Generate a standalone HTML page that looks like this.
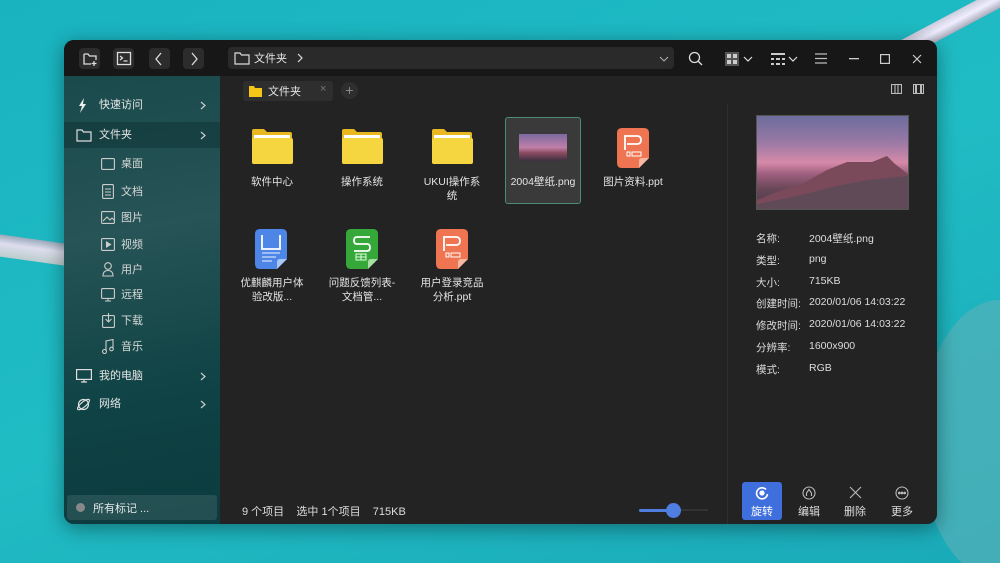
<!DOCTYPE html>
<html><head><meta charset="utf-8"><style>
*{margin:0;padding:0;box-sizing:border-box}
html,body{width:1000px;height:563px;overflow:hidden}
body{position:relative;font-family:"Liberation Sans","Noto Sans CJK SC",sans-serif;font-size:11px;color:#ddd;
background:linear-gradient(160deg,#19b3c0,#20bcc4 50%,#1aaab8);}
.bridge1{position:absolute;left:-20px;top:238px;width:90px;height:22px;background:linear-gradient(#9ab,#dde 40%,#bcc);transform:rotate(8deg)}
.bridge2{position:absolute;left:880px;top:10px;width:160px;height:18px;background:linear-gradient(#ccd,#eef,#aab);transform:rotate(-28deg)}
.island{position:absolute;left:920px;top:300px;width:160px;height:280px;border-radius:50%;background:#5fb0b8;opacity:.6}
.win{position:absolute;left:64px;top:40px;width:873px;height:484px;border-radius:10px;overflow:hidden;background:#232323;box-shadow:0 4px 20px rgba(0,0,0,.4)}
.title{position:absolute;left:0;top:0;width:873px;height:36px;background:#171717}
.side{position:absolute;left:0;top:36px;width:156px;height:448px;background:linear-gradient(170deg,#1a4a4c,#275456 35%,#0f4345 70%,#0b3b3e)}
.tb{position:absolute;top:8px;width:21px;height:21px;border-radius:4px;background:#2c2c2c}
.addr{position:absolute;left:164px;top:7px;width:446px;height:22px;border-radius:4px;background:#2a2a2a}
svg{position:absolute}
.si{position:absolute;left:0;width:156px;height:24px;line-height:24px;color:#e6e6e6}
.sub{position:absolute;left:57px;color:#d8d8d8;line-height:14px}
.ic{position:absolute;width:90px;text-align:center;font-size:10.5px;line-height:14px;color:#e4e4e4;white-space:nowrap}
.info{position:absolute;left:692px;font-size:10.5px;color:#ddd;white-space:nowrap}
.info span{position:absolute;left:53px;white-space:nowrap}
.btn{position:absolute;top:442px;width:40px;height:38px;text-align:center;font-size:10.5px;color:#ddd;padding-top:21px}
</style></head><body>
<div class="bridge1"></div><div class="bridge2"></div><div class="island"></div>
<div class="win">
<div class="title">
 <div class="tb" style="left:15px"></div><div class="tb" style="left:49px"></div><div class="tb" style="left:85px"></div><div class="tb" style="left:119px"></div>
 <svg style="left:18px;top:11px" width="16" height="16" viewBox="0 0 16 16" fill="none" stroke="#ddd" stroke-width="1.3"><path d="M2 3h4l1.5 2H14v4M2 3v10h7M12 10v5M9.5 12.5h5"/></svg>
 <svg style="left:52px;top:11px" width="16" height="15" viewBox="0 0 16 15" fill="none" stroke="#ddd" stroke-width="1.3"><rect x="1.5" y="1.5" width="13" height="12"/><path d="M4 5l2.5 2L4 9M7.5 10h4"/></svg>
 <svg style="left:90px;top:12px" width="10" height="14" fill="none" stroke="#ddd" stroke-width="1.3"><path d="M7 1L2 7l5 6"/></svg>
 <svg style="left:125px;top:12px" width="10" height="14" fill="none" stroke="#ddd" stroke-width="1.3"><path d="M3 1l5 6-5 6"/></svg>
 <div class="addr"></div>
 <svg style="left:170px;top:11px" width="16" height="14" fill="none" stroke="#ddd" stroke-width="1.2"><path d="M1 2h5l1.5 2H15v9H1z"/></svg>
 <div style="position:absolute;left:190px;top:10px;color:#e4e4e4;font-size:11px">文件夹</div>
 <svg style="left:232px;top:13px" width="8" height="10" fill="none" stroke="#ddd" stroke-width="1.2"><path d="M2 1l4 4-4 4"/></svg>
 <svg style="left:595px;top:16px" width="10" height="6" fill="none" stroke="#aaa" stroke-width="1.1"><path d="M1 1l4 4 4-4"/></svg>
 <svg style="left:624px;top:11px" width="15" height="15" fill="none" stroke="#ddd" stroke-width="1.3"><circle cx="6.5" cy="6.5" r="5"/><path d="M10 10l4 4"/></svg>
 <svg style="left:661px;top:12px" width="14" height="14" fill="#ccc"><rect x="0" y="0" width="14" height="14" fill="#555"/><rect x="2" y="2" width="4" height="4"/><rect x="8" y="2" width="4" height="4"/><rect x="2" y="8" width="4" height="4"/><rect x="8" y="8" width="4" height="4"/></svg>
 <svg style="left:679px;top:16px" width="10" height="6" fill="none" stroke="#ddd" stroke-width="1.2"><path d="M1 1l4 4 4-4"/></svg>
 <svg style="left:707px;top:13px" width="14" height="12" fill="#ccc"><rect x="0" y="0" width="14" height="2"/><rect x="0" y="5" width="3" height="2"/><rect x="5" y="5" width="4" height="2"/><rect x="11" y="5" width="3" height="2"/><rect x="0" y="10" width="3" height="2"/><rect x="5" y="10" width="4" height="2"/><rect x="11" y="10" width="3" height="2"/></svg>
 <svg style="left:724px;top:16px" width="10" height="6" fill="none" stroke="#ddd" stroke-width="1.2"><path d="M1 1l4 4 4-4"/></svg>
 <svg style="left:751px;top:13px" width="12" height="11" fill="none" stroke="#bbb" stroke-width="1.2"><path d="M0 1h12M0 5.5h12M0 10h12"/></svg>
 <svg style="left:785px;top:18px" width="10" height="2"><rect width="10" height="1.3" fill="#ccc"/></svg>
 <svg style="left:816px;top:14px" width="10" height="10" fill="none" stroke="#ccc" stroke-width="1.2"><rect x=".6" y=".6" width="8.8" height="8.8"/></svg>
 <svg style="left:848px;top:14px" width="10" height="10" fill="none" stroke="#ccc" stroke-width="1.2"><path d="M1 1l8 8M9 1L1 9"/></svg>
</div>
<div class="side">
 <div class="si" style="top:17px"><svg style="left:14px;top:5px" width="10" height="15" fill="#eee"><path d="M6 0L1 8h3l-2 7 6-9H5z"/></svg><span style="position:absolute;left:35px">快速访问</span><svg style="left:136px;top:8px" width="6" height="9" fill="none" stroke="#ccc" stroke-width="1.2"><path d="M1 1l4 3.5L1 8"/></svg></div>
 <div class="si" style="top:46px;height:26px;background:rgba(20,60,62,.8)"><svg style="left:12px;top:6px" width="16" height="14" fill="none" stroke="#ddd" stroke-width="1.2"><path d="M1 2h5l1.5 2H15v9H1z"/></svg><span style="position:absolute;left:35px;line-height:26px">文件夹</span><svg style="left:136px;top:9px" width="6" height="9" fill="none" stroke="#ccc" stroke-width="1.2"><path d="M1 1l4 3.5L1 8"/></svg></div>
 <svg style="left:37px;top:82px" width="14" height="12" fill="none" stroke="#ccc" stroke-width="1.1"><rect x=".6" y=".6" width="12.8" height="10.8" rx="1"/></svg><div class="sub" style="top:81px">桌面</div>
 <svg style="left:38px;top:108px" width="12" height="15" fill="none" stroke="#ccc" stroke-width="1.1"><rect x=".6" y=".6" width="10.8" height="13.8" rx="1"/><path d="M3 5h6M3 8h6M3 11h6"/></svg><div class="sub" style="top:109px">文档</div>
 <svg style="left:37px;top:135px" width="14" height="13" fill="none" stroke="#ccc" stroke-width="1.1"><rect x=".6" y=".6" width="12.8" height="11.8" rx="1"/><path d="M2 10l4-4 3 3 2-2 2 2"/></svg><div class="sub" style="top:135px">图片</div>
 <svg style="left:37px;top:162px" width="14" height="13" fill="none" stroke="#ccc" stroke-width="1.1"><rect x=".6" y=".6" width="12.8" height="11.8" rx="1"/><path d="M5.5 4v5l4-2.5z" fill="#ccc"/></svg><div class="sub" style="top:162px">视频</div>
 <svg style="left:38px;top:186px" width="12" height="15" fill="none" stroke="#ccc" stroke-width="1.1"><circle cx="6" cy="4" r="3.3"/><path d="M1 14c0-4 2-5.5 5-5.5s5 1.5 5 5.5z"/></svg><div class="sub" style="top:187px">用户</div>
 <svg style="left:37px;top:212px" width="14" height="14" fill="none" stroke="#ccc" stroke-width="1.1"><rect x=".6" y=".6" width="12.8" height="9.8" rx="1"/><path d="M4 13h6M7 10.5v2.5"/></svg><div class="sub" style="top:212px">远程</div>
 <svg style="left:38px;top:237px" width="13" height="15" fill="none" stroke="#ccc" stroke-width="1.1"><rect x=".6" y="2.6" width="11.8" height="11.8" rx="1"/><path d="M6.5 0v9M3.5 6l3 3 3-3"/></svg><div class="sub" style="top:238px">下载</div>
 <svg style="left:38px;top:263px" width="12" height="15" fill="none" stroke="#ccc" stroke-width="1.1"><path d="M4 12V2l7-1.5v9"/><circle cx="2.5" cy="12.5" r="2"/><circle cx="9.5" cy="10" r="1.8"/></svg><div class="sub" style="top:264px">音乐</div>
 <div class="si" style="top:288px"><svg style="left:12px;top:5px" width="16" height="14" fill="none" stroke="#ddd" stroke-width="1.2"><rect x=".6" y=".6" width="14.8" height="9.8"/><path d="M5 13h6M8 10.5v2.5"/></svg><span style="position:absolute;left:35px">我的电脑</span><svg style="left:136px;top:8px" width="6" height="9" fill="none" stroke="#ccc" stroke-width="1.2"><path d="M1 1l4 3.5L1 8"/></svg></div>
 <div class="si" style="top:316px"><svg style="left:12px;top:5px" width="15" height="15" fill="none" stroke="#ddd" stroke-width="1.2"><circle cx="7.5" cy="7.5" r="5"/><ellipse cx="7.5" cy="7.5" rx="7.5" ry="2.5" transform="rotate(-40 7.5 7.5)"/></svg><span style="position:absolute;left:35px">网络</span><svg style="left:136px;top:8px" width="6" height="9" fill="none" stroke="#ccc" stroke-width="1.2"><path d="M1 1l4 3.5L1 8"/></svg></div>
 <div style="position:absolute;left:3px;top:419px;width:150px;height:25px;background:rgba(255,255,255,.1);border-radius:3px"><div style="position:absolute;left:9px;top:8px;width:9px;height:9px;border-radius:50%;background:#888"></div><span style="position:absolute;left:26px;top:5px;color:#e6e6e6">所有标记 ...</span></div>
</div>
<!-- tab -->
<div style="position:absolute;left:179px;top:41px;width:90px;height:20px;border-radius:3px;background:#2e2e2e"></div>
<svg style="left:185px;top:46px" width="13" height="11"><path d="M0 0h5l1 2h7v9H0z" fill="#f5c518"/></svg>
<div style="position:absolute;left:204px;top:43px;color:#e4e4e4">文件夹</div>
<div style="position:absolute;left:256px;top:43px;color:#777">×</div>
<div style="position:absolute;left:277px;top:42px;width:17px;height:17px;border-radius:50%;background:#2e2e2e;color:#888;text-align:center;line-height:16px;font-size:14px">+</div>
<svg style="left:827px;top:44px" width="11" height="10" fill="none" stroke="#bbb" stroke-width="1.1"><rect x=".5" y=".5" width="10" height="9"/><path d="M4 .5v9M7 .5v9"/></svg>
<svg style="left:849px;top:44px" width="11" height="10" fill="none" stroke="#bbb" stroke-width="1.1"><rect x=".5" y=".5" width="10" height="9"/><path d="M3 .5v9M8 .5v9" stroke-width="2"/></svg>
<div style="position:absolute;left:663px;top:64px;width:1px;height:420px;background:#2e2e2e"></div>
<!-- files -->
<svg style="left:187px;top:89px" width="42" height="35"><path d="M1 2q0-2 2-2h10l3 3h23q2 0 2 2v28q0 2-2 2H3q-2 0-2-2z" fill="#e9b820"/><rect x="3" y="6" width="36" height="4" fill="#fff"/><rect x="1" y="9" width="41" height="26" rx="2" fill="#f6d640"/></svg>
<div class="ic" style="left:163px;top:135px">软件中心</div>
<svg style="left:277px;top:89px" width="42" height="35"><path d="M1 2q0-2 2-2h10l3 3h23q2 0 2 2v28q0 2-2 2H3q-2 0-2-2z" fill="#e9b820"/><rect x="3" y="6" width="36" height="4" fill="#fff"/><rect x="1" y="9" width="41" height="26" rx="2" fill="#f6d640"/></svg>
<div class="ic" style="left:253px;top:135px">操作系统</div>
<svg style="left:367px;top:89px" width="42" height="35"><path d="M1 2q0-2 2-2h10l3 3h23q2 0 2 2v28q0 2-2 2H3q-2 0-2-2z" fill="#e9b820"/><rect x="3" y="6" width="36" height="4" fill="#fff"/><rect x="1" y="9" width="41" height="26" rx="2" fill="#f6d640"/></svg>
<div class="ic" style="left:343px;top:135px">UKUI操作系<br>统</div>
<div style="position:absolute;left:441px;top:77px;width:76px;height:87px;border:1px solid #4b8b7a;border-radius:3px;background:#3a3a3a"></div>
<div style="position:absolute;left:455px;top:94px;width:48px;height:27px;background:linear-gradient(180deg,#7b6aa0,#c07fa8 50%,#8b4a60 70%,#3a3040)"></div>
<div class="ic" style="left:434px;top:135px">2004壁纸.png</div>
<svg style="left:553px;top:88px" width="32" height="40"><path d="M5 0h22q5 0 5 5v25l-10 10H5q-5 0-5-5V5q0-5 5-5z" fill="#ef7451"/><path d="M22 40l10-10h-7q-3 0-3 3z" fill="#f7b8a2"/><path d="M8 22V8h12q4 0 4 4t-4 4H10" fill="none" stroke="#fff" stroke-width="1.8"/><rect x="10" y="24" width="3" height="4" fill="none" stroke="#fff"/><rect x="15" y="24" width="9" height="4" fill="none" stroke="#fff"/></svg>
<div class="ic" style="left:524px;top:135px">图片资料.ppt</div>
<svg style="left:191px;top:189px" width="32" height="40"><path d="M5 0h22q5 0 5 5v25l-10 10H5q-5 0-5-5V5q0-5 5-5z" fill="#4d86e6"/><path d="M22 40l10-10h-7q-3 0-3 3z" fill="#a9c6f5"/><path d="M7 6v14h18V6" fill="none" stroke="#fff" stroke-width="1.8"/><path d="M7 24h18M7 28h14M7 32h10" stroke="#cfe0fb" stroke-width="1.2"/></svg>
<div class="ic" style="left:163px;top:236px">优麒麟用户体<br>验改版...</div>
<svg style="left:282px;top:189px" width="32" height="40"><path d="M5 0h22q5 0 5 5v25l-10 10H5q-5 0-5-5V5q0-5 5-5z" fill="#36a83a"/><path d="M22 40l10-10h-7q-3 0-3 3z" fill="#a8dfa4"/><path d="M24 8H11q-3 0-3 3.5T11 15h10q3 0 3 3.5T21 22H8" fill="none" stroke="#fff" stroke-width="1.8"/><rect x="10" y="25" width="10" height="6" fill="none" stroke="#dfd" stroke-width="1"/><path d="M15 25v6M10 28h10" stroke="#dfd"/></svg>
<div class="ic" style="left:253px;top:236px">问题反馈列表-<br>文档管...</div>
<svg style="left:372px;top:189px" width="32" height="40"><path d="M5 0h22q5 0 5 5v25l-10 10H5q-5 0-5-5V5q0-5 5-5z" fill="#ef7451"/><path d="M22 40l10-10h-7q-3 0-3 3z" fill="#f7b8a2"/><path d="M8 22V8h12q4 0 4 4t-4 4H10" fill="none" stroke="#fff" stroke-width="1.8"/><rect x="10" y="24" width="3" height="4" fill="none" stroke="#fff"/><rect x="15" y="24" width="9" height="4" fill="none" stroke="#fff"/></svg>
<div class="ic" style="left:343px;top:236px">用户登录竞品<br>分析.ppt</div>
<!-- status -->
<div style="position:absolute;left:178px;top:463px;color:#ddd;white-space:nowrap">9 个项目&nbsp;&nbsp;&nbsp;&nbsp;选中 1个项目&nbsp;&nbsp;&nbsp;&nbsp;715KB</div>
<div style="position:absolute;left:575px;top:469px;width:69px;height:2px;background:#333"></div>
<div style="position:absolute;left:575px;top:469px;width:34px;height:3px;background:#4f7de0;border-radius:2px"></div>
<div style="position:absolute;left:602px;top:463px;width:15px;height:15px;border-radius:50%;background:#4f7de0"></div>
<!-- preview -->
<div style="position:absolute;left:692px;top:75px;width:153px;height:95px;border:1px solid #555;background:linear-gradient(180deg,#6b6c9c 0%,#9e7aa6 30%,#d68aa8 50%,#a06080 62%,#6a4858 78%,#4a3a48 100%)"></div>
<svg style="left:693px;top:110px" width="151" height="59"><path d="M0 59V50l20-8 25-8 25-14 20-8h25l15-6 8 8 13 10v35z" fill="#7b4a5a"/><path d="M0 59V54l40-8 40-10 30-6 41-4v33z" fill="#5a4a58" opacity=".8"/></svg>
<div class="info" style="top:191px">名称:<span>2004壁纸.png</span></div>
<div class="info" style="top:213px">类型:<span>png</span></div>
<div class="info" style="top:235px">大小:<span>715KB</span></div>
<div class="info" style="top:256px">创建时间:<span>2020/01/06 14:03:22</span></div>
<div class="info" style="top:278px">修改时间:<span>2020/01/06 14:03:22</span></div>
<div class="info" style="top:300px">分辨率:<span>1600x900</span></div>
<div class="info" style="top:322px">模式:<span>RGB</span></div>
<div class="btn" style="left:678px;background:#3f6fdc;border-radius:3px;color:#fff"></div>
<svg style="left:691px;top:446px" width="14" height="14" fill="none" stroke="#fff" stroke-width="1.6"><path d="M11 3.5A5.5 5.5 0 1 0 12.5 8"/><circle cx="7" cy="7" r="1.8" fill="#fff"/></svg>
<div style="position:absolute;left:678px;top:463px;width:40px;text-align:center;color:#fff">旋转</div>
<svg style="left:738px;top:446px" width="14" height="14" fill="none" stroke="#bbb" stroke-width="1.1"><circle cx="7" cy="7" r="6"/><path d="M4.5 10V7L7 3.5 9.5 7v3"/></svg>
<div style="position:absolute;left:725px;top:463px;width:40px;text-align:center">编辑</div>
<svg style="left:785px;top:446px" width="13" height="13" fill="none" stroke="#bbb" stroke-width="1.1"><path d="M1 1l11 11M12 1L1 12"/></svg>
<div style="position:absolute;left:771px;top:463px;width:40px;text-align:center">删除</div>
<svg style="left:831px;top:446px" width="14" height="14" fill="none" stroke="#bbb" stroke-width="1.1"><circle cx="7" cy="7" r="6"/><circle cx="4.3" cy="7" r=".8" fill="#bbb"/><circle cx="7" cy="7" r=".8" fill="#bbb"/><circle cx="9.7" cy="7" r=".8" fill="#bbb"/></svg>
<div style="position:absolute;left:818px;top:463px;width:40px;text-align:center">更多</div>
</div>
</body></html>
